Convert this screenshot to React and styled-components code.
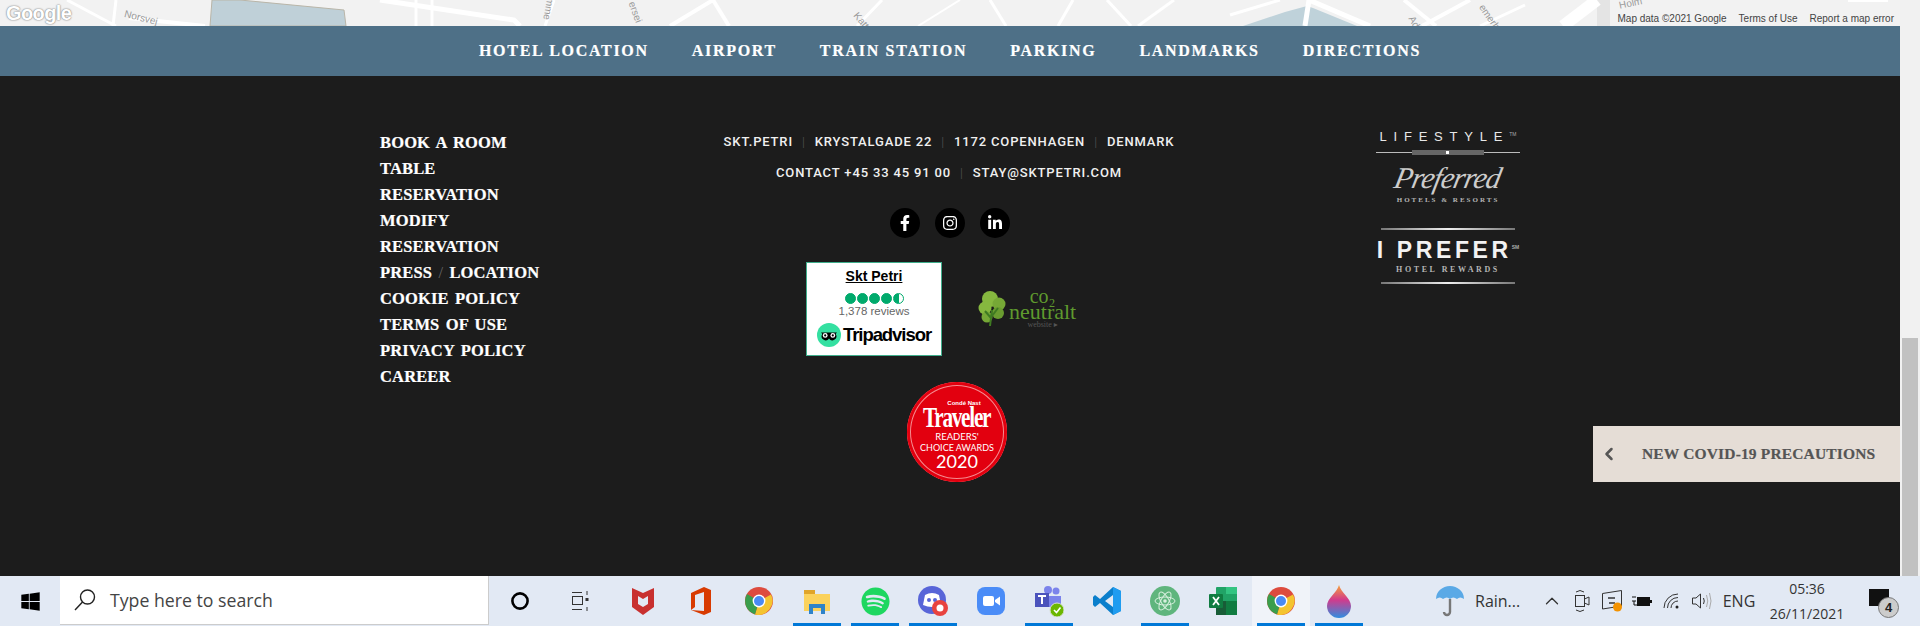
import React from "react";
import styled, { createGlobalStyle } from "styled-components";
import { FaFacebookF, FaInstagram, FaLinkedinIn, FaWindows, FaSpotify } from "react-icons/fa";
import { FiChevronLeft, FiChevronUp } from "react-icons/fi";

const GlobalStyle = createGlobalStyle`
  html, body { margin: 0; padding: 0; background: #1c1c1c; overflow: hidden; }
  * { box-sizing: border-box; }
`;

const serif = `"Liberation Serif", "DejaVu Serif", serif`;
const sans = `"Liberation Sans", Arial, sans-serif`;

const Page = styled.div`
  width: 1920px;
  height: 626px;
  display: flex;
  flex-direction: column;
`;
const Top = styled.div`
  height: 576px;
  display: flex;
`;
const Site = styled.div`
  width: 1900px;
  display: flex;
  flex-direction: column;
`;
const Scrollbar = styled.div`
  width: 20px;
  background: #f1f1f1;
  padding: 338px 2px 0;
`;
const Thumb = styled.div`
  height: 100%;
  background: #c1c1c1;
`;

const MapStrip = styled.div`
  height: 26px;
  position: relative;
  background: #f2f2f2;
  overflow: hidden;
`;
const MapSvg = styled.svg`
  display: block;
`;
const GoogleMark = styled.span`
  position: absolute;
  left: 6px;
  top: 1px;
  font: bold 20px/24px ${sans};
  letter-spacing: -0.6px;
  color: #fff;
  text-shadow: 0 0 2px #888, 0 0 1px #777;
`;
const MapCredits = styled.div`
  position: absolute;
  right: 6px;
  bottom: 0;
  display: flex;
  gap: 12px;
  font: 10px/14px ${sans};
  color: #444;
`;
const StreetName = styled.span`
  position: absolute;
  left: ${(p) => p.$x}px;
  top: ${(p) => p.$y}px;
  font: 10px/12px ${sans};
  color: #999;
  white-space: nowrap;
  transform: rotate(${(p) => p.$r || 0}deg);
  transform-origin: left top;
`;

const LocationBar = styled.nav`
  height: 50px;
  background: #4e7087;
  display: flex;
  justify-content: center;
  align-items: center;
  gap: 43px;
`;
const LocationLink = styled.a`
  font: bold 16px/20px ${serif};
  letter-spacing: 1.7px;
  -webkit-text-stroke: 0.2px #fff;
  color: #fff;
`;

const Footer = styled.footer`
  flex: 1;
  position: relative;
  background: #1c1c1c;
  display: flex;
  padding-left: 380px;
`;
const LinkColumn = styled.ul`
  list-style: none;
  margin: 0;
  padding: 54px 0 0;
  width: 170px;
`;
const FooterLink = styled.li`
  font: bold 16.5px/26px ${serif};
  letter-spacing: 0.15px;
  word-spacing: 2px;
  -webkit-text-stroke: 0.2px #fff;
  color: #fff;
`;
const Slash = styled.span`
  color: #666;
  font-weight: normal;
  -webkit-text-stroke: 0;
`;
const CenterColumn = styled.div`
  width: 798px;
  padding-top: 50px;
  display: flex;
  flex-direction: column;
  align-items: center;
`;
const AddressLine = styled.div`
  font: 500 13px/31px Roboto, ${sans};
  letter-spacing: 0.85px;
  color: #f0f0f0;
  display: flex;
  white-space: nowrap;
`;
const AddressPart = styled.span`
  & + &::before {
    content: "|";
    color: #555;
    margin: 0 9px;
    font-weight: 300;
  }
`;
const SocialRow = styled.div`
  display: flex;
  gap: 15px;
  margin: 20px 0 0 2px;
`;
const SocialIcon = styled.a`
  width: 30px;
  height: 30px;
  border-radius: 50%;
  background: #000;
  color: #fff;
  display: flex;
  align-items: center;
  justify-content: center;
  font-size: 16px;
`;
const BadgeRow = styled.div`
  width: 286px;
  margin-top: 24px;
  display: flex;
  gap: 35px;
`;
const TripCard = styled.div`
  width: 136px;
  height: 94px;
  background: #fff;
  border: 1.5px solid #3fae8c;
  display: flex;
  flex-direction: column;
  align-items: center;
  padding-top: 5px;
`;
const TripTitle = styled.div`
  font: bold 14px/17px ${sans};
  color: #000;
  text-decoration: underline;
`;
const Bubbles = styled.div`
  display: flex;
  gap: 1px;
  margin-top: 8px;
`;
const Bubble = styled.span`
  width: 11px;
  height: 11px;
  border-radius: 50%;
  border: 1px solid #00aa6c;
  background: ${(p) =>
    p.$half ? "linear-gradient(90deg, #00aa6c 50%, #fff 50%)" : "#00aa6c"};
`;
const TripReviews = styled.div`
  font: 11.5px/13px ${sans};
  color: #666;
  margin-top: 1px;
`;
const TripBrand = styled.div`
  display: flex;
  align-items: center;
  gap: 2px;
  margin-top: 5px;
  font: bold 18.5px/24px ${sans};
  letter-spacing: -1.05px;
  color: #000;
`;
const Co2Badge = styled.div`
  display: flex;
  align-items: center;
  height: 44px;
  margin-top: 25px;
  gap: 2px;
`;
const Co2Text = styled.div`
  display: flex;
  flex-direction: column;
  align-items: center;
  font-family: ${serif};
  color: #5f9a2e;
`;
const Co2Line = styled.span`
  font-size: ${(p) => p.$size}px;
  line-height: ${(p) => p.$lh}px;
  color: ${(p) => p.$color || "inherit"};
`;
const AwardSeal = styled.div`
  width: 100px;
  height: 100px;
  margin: 26px 0 0 16px;
  border-radius: 50%;
  background: #e2000f;
  box-shadow: inset 0 0 0 3px #e2000f, inset 0 0 0 4px #f58a8f;
  color: #fff;
  display: flex;
  flex-direction: column;
  align-items: center;
  padding-top: 19px;
  font-family: Lato, ${sans};
`;
const AwardBrand = styled.div`
  font: bold 6px/5px ${sans};
  margin-left: 14px;
  white-space: nowrap;
`;
const AwardTitle = styled.div`
  font: bold 25px/24px ${serif};
  letter-spacing: -1.5px;
  transform: scale(0.85, 1.15);
  margin-bottom: 1px;
`;
const AwardLine = styled.div`
  font-size: ${(p) => p.$size}px;
  line-height: ${(p) => p.$lh}px;
  white-space: nowrap;
`;
const RightColumn = styled.div`
  width: 146px;
  margin-left: 27px;
  padding-top: 53px;
  display: flex;
  flex-direction: column;
  align-items: center;
  color: #e8e8e8;
`;
const LifestyleMark = styled.div`
  font: 13px/16px ${sans};
  letter-spacing: 6.8px;
  white-space: nowrap;
`;
const TradeMark = styled.sup`
  font-size: 5px;
  letter-spacing: 0;
  line-height: 0;
  color: #aaa;
`;
const Divider = styled.div`
  width: 144px;
  height: 1px;
  margin-top: 7px;
  background: #bbb;
  position: relative;
  &::before {
    content: "";
    position: absolute;
    left: 70px;
    top: -1px;
    width: 3px;
    height: 3px;
    background: #fff;
    z-index: 1;
  }
  &::after {
    content: "";
    position: absolute;
    left: 36px;
    right: 36px;
    top: -2px;
    height: 5px;
    background: #666;
  }
`;
const Script = styled.div`
  font: italic 30px/30px ${serif};
  letter-spacing: -1px;
  margin-top: 10px;
  color: #ccc;
  transform: skewX(-12deg);
`;
const TinyCaps = styled.div`
  font: bold ${(p) => p.$size}px/10px ${serif};
  letter-spacing: ${(p) => p.$spacing}px;
  color: #b5b5b5;
  white-space: nowrap;
  margin-top: ${(p) => p.$top || 0}px;
`;
const ShinyRule = styled.div`
  width: 134px;
  height: 2px;
  margin-top: ${(p) => p.$top}px;
  background: linear-gradient(90deg, #777, #eee 50%, #777);
`;
const PreferMark = styled.div`
  font: bold 23px/24px ${sans};
  letter-spacing: 3.6px;
  margin-top: 8px;
  white-space: nowrap;
  color: #f2f2f2;
`;

const CovidTab = styled.div`
  position: absolute;
  right: 0;
  top: 350px;
  width: 307px;
  height: 56px;
  background: #e5ddd6;
  display: flex;
  align-items: center;
  padding-left: 6px;
  color: #555;
`;
const CovidText = styled.span`
  margin-left: 23px;
  font: bold 15.5px/20px ${serif};
  letter-spacing: 0.15px;
  -webkit-text-stroke: 0.2px #555;
  white-space: nowrap;
`;

const Taskbar = styled.div`
  height: 50px;
  background: #e2e9f4;
  display: flex;
  align-items: stretch;
`;
const StartButton = styled.div`
  width: 60px;
  display: flex;
  align-items: center;
  justify-content: center;
  color: #000;
  font-size: 21px;
`;
const SearchBox = styled.div`
  width: 429px;
  margin: 0 0 1px;
  background: #fff;
  border-right: 1px solid #ccc;
  border-bottom: 1px solid #ccc;
  display: flex;
  align-items: center;
  gap: 14px;
  padding-left: 14px;
  font: 17.7px/24px "Open Sans", ${sans};
  color: #444;
`;
const TaskSlot = styled.div`
  width: ${(p) => p.$w || 58}px;
  position: relative;
  display: flex;
  align-items: center;
  justify-content: center;
  background: ${(p) => (p.$active ? "#f0f3f9" : "transparent")};
  &::after {
    content: "";
    display: ${(p) => (p.$open ? "block" : "none")};
    position: absolute;
    left: 5px;
    right: 5px;
    bottom: 0;
    height: 3px;
    background: #0078d7;
  }
`;
const AppStrip = styled.div`
  display: flex;
  margin-left: 5px;
`;
const Tray = styled.div`
  margin-left: 60px;
  display: flex;
  align-items: center;
  color: #333;
  font: 16px/20px "Open Sans", ${sans};
`;
const TraySlot = styled.div`
  width: ${(p) => p.$w}px;
  padding-left: ${(p) => p.$pad || 0}px;
  display: flex;
  align-items: center;
  justify-content: ${(p) => (p.$pad ? "flex-start" : "center")};
`;
const Clock = styled.div`
  width: 92px;
  text-align: center;
  font: 14px/25px "Open Sans", ${sans};
`;
const Notice = styled.div`
  position: relative;
  margin: -8px 0 0 16px;
  width: 20px;
  height: 17px;
  background: #111;
`;
const NoticeCount = styled.span`
  position: absolute;
  left: 9px;
  top: 8px;
  width: 21px;
  height: 21px;
  border-radius: 50%;
  background: #ccc;
  border: 1px solid #777;
  font: bold 13px/19px ${sans};
  color: #222;
  text-align: center;
`;

const roads = [
  ["M67 0 L116 26", 3], ["M116 0 L113 26", 3], ["M129 18 L205 26", 4], ["M380 0 L514 20 L520 26", 5],
  ["M416 0 L416 26", 3], ["M432 0 L432 26", 3], ["M545 26 L554 0", 3], ["M670 26 L713 0 L729 26", 4],
  ["M857 26 L882 0", 3], ["M918 26 L960 0", 2], ["M990 0 L1006 26", 3], ["M1058 26 L1073 0", 3],
  ["M1107 0 L1131 26", 3], ["M1138 26 L1174 0", 3], ["M1230 15 L1280 0", 3], ["M1305 26 L1309 0", 5],
  ["M1309 0 L1370 26", 5], ["M1404 0 L1436 26", 4], ["M1422 26 L1470 0", 4], ["M1480 26 L1525 5", 3],
  ["M1563 26 L1597 0", 12],
];

const MapLayer = () => (
  <MapStrip>
    <MapSvg width="1900" height="26" viewBox="0 0 1900 26">
      <path d="M210 26 L212 0 L240 0 L344 10 L346 26 Z" fill="#bfd0d8" stroke="#b9b5a8" />
      <path d="M1243 26 L1285 12 L1307 6 L1313 8 L1357 26 Z" fill="#bfd2da" />
      <rect x="1597" y="0" width="13" height="26" fill="#e4e4e4" />
      <rect x="1848" y="0" width="40" height="2" fill="#fff" />
      {roads.map(([d, w]) => (
        <path key={d} d={d} stroke="#fff" strokeWidth={w} fill="none" />
      ))}
    </MapSvg>
    <GoogleMark>Google</GoogleMark>
    <StreetName $x={126} $y={8} $r={14}>Norsvej</StreetName>
    <StreetName $x={1416} $y={14} $r={60}>Ad</StreetName>
    <StreetName $x={1486} $y={2} $r={55}>emerho</StreetName>
    <StreetName $x={1618} $y={0} $r={-12}>Holm</StreetName>
    <StreetName $x={860} $y={10} $r={50}>Katt</StreetName>
    <StreetName $x={637} $y={0} $r={70}>ersei</StreetName>
    <StreetName $x={556} $y={-1} $r={100}>mme</StreetName>
    <MapCredits>
      <span>Map data ©2021 Google</span>
      <span>Terms of Use</span>
      <span>Report a map error</span>
    </MapCredits>
  </MapStrip>
);

const TripOwl = () => (
  <svg width="24" height="24" viewBox="0 0 24 24">
    <circle cx="12" cy="12" r="12" fill="#34e0a1" />
    <path d="M4 9.5 H20 L18.6 11 A4 4 0 0 1 12 15.6 A4 4 0 0 1 5.4 11 Z" fill="#000" />
    <circle cx="8.2" cy="12.4" r="2.4" fill="#fff" />
    <circle cx="15.8" cy="12.4" r="2.4" fill="#fff" />
    <circle cx="8.2" cy="12.4" r="1.1" fill="#000" />
    <circle cx="15.8" cy="12.4" r="1.1" fill="#000" />
  </svg>
);

const Tree = () => (
  <svg width="30" height="38" viewBox="0 0 28 38">
    <circle cx="12" cy="9" r="8" fill="#86b83f" />
    <circle cx="21" cy="14" r="6.5" fill="#76a836" />
    <circle cx="7" cy="18" r="6.5" fill="#86b83f" />
    <circle cx="20" cy="23" r="6" fill="#6a9c30" />
    <circle cx="9" cy="27" r="5.5" fill="#76a836" />
    <path d="M12 36 L14 20 M14 26 L20 18 M13 28 L7 21" stroke="#3f7a22" strokeWidth="2" fill="none" />
  </svg>
);

const McAfee = () => (
  <svg width="26" height="30" viewBox="0 0 26 30">
    <path d="M2 2 L13 7 L24 2 V21 L13 29 L2 21 Z" fill="#c8302f" />
    <path d="M8 10 L13 13 L18 10 V18 L13 21 L8 18 Z" fill="#e2e9f4" />
  </svg>
);
const Office = () => (
  <svg width="26" height="30" viewBox="0 0 26 30">
    <path d="M3 7 L16 1 L23 4 V26 L16 29 L3 24 L16 25 V6 L7 9 V21 L3 24 Z" fill="#d83b01" />
  </svg>
);
const Chrome = () => (
  <svg width="28" height="28" viewBox="0 0 28 28">
    <circle cx="14" cy="14" r="14" fill="#dd4b3e" />
    <path d="M14 14 L26 7.5 A14 14 0 0 1 10 27.4 Z" fill="#f4c430" />
    <path d="M14 14 L10 27.4 A14 14 0 0 1 2 7 Z" fill="#3a9e4c" />
    <circle cx="14" cy="14" r="6.4" fill="#fff" />
    <circle cx="14" cy="14" r="5" fill="#4a8af4" />
  </svg>
);
const Folder = () => (
  <svg width="28" height="28" viewBox="0 0 28 28">
    <path d="M1 3 H12 V7 H1 Z" fill="#e0a52a" />
    <path d="M1 7 H27 V24 H1 Z" fill="#fbd25c" />
    <path d="M6 17 H22 V27 H18 V21 H10 V27 H6 Z" fill="#2e83c8" />
  </svg>
);
const Discord = () => (
  <svg width="30" height="32" viewBox="0 0 30 32">
    <circle cx="14" cy="15" r="14" fill="#5865d8" />
    <path d="M7 10 Q14 6 21 10 L23 20 Q14 24 5 20 Z" fill="#fff" />
    <circle cx="11" cy="15" r="2" fill="#5865d8" />
    <circle cx="17" cy="15" r="2" fill="#5865d8" />
    <circle cx="22" cy="23" r="8" fill="#e8433f" />
    <circle cx="22" cy="23" r="3.5" fill="#fff" />
  </svg>
);
const Zoom = () => (
  <svg width="28" height="28" viewBox="0 0 28 28">
    <rect width="28" height="28" rx="8" fill="#4a8cf7" />
    <rect x="6" y="9" width="11" height="10" rx="2" fill="#fff" />
    <path d="M18 13 L23 9.5 V18.5 L18 15 Z" fill="#fff" />
  </svg>
);
const Teams = () => (
  <svg width="30" height="32" viewBox="0 0 30 32">
    <circle cx="22" cy="6" r="3.5" fill="#7b83eb" />
    <circle cx="14" cy="5" r="4" fill="#7b83eb" />
    <path d="M12 11 H27 V22 H12 Z" fill="#7b83eb" />
    <rect x="1" y="8" width="14" height="14" fill="#4b53bc" />
    <path d="M4 11 H12 M8 11 V19" stroke="#fff" strokeWidth="2" />
    <circle cx="23" cy="25" r="7" fill="#6bb700" stroke="#d7dfd0" />
    <path d="M20 25 L22.5 27.5 L26.5 22.5" stroke="#fff" strokeWidth="1.6" fill="none" />
  </svg>
);
const VsCode = () => (
  <svg width="30" height="30" viewBox="0 0 30 30">
    <path d="M21 1 L29 5 V25 L21 29 L8 17 L3 21 L1 19 V11 L3 9 L8 13 Z M21 9 L13 15 L21 21 Z" fill="#0b7fcc" />
    <path d="M21 1 L29 5 V25 L21 29 Z" fill="#1f9cf0" />
  </svg>
);
const Atom = () => (
  <svg width="30" height="30" viewBox="0 0 30 30">
    <circle cx="15" cy="15" r="15" fill="#5fb57d" />
    <g stroke="#d8f0df" strokeWidth="1" fill="none">
      <ellipse cx="15" cy="15" rx="10" ry="4" />
      <ellipse cx="15" cy="15" rx="10" ry="4" transform="rotate(60 15 15)" />
      <ellipse cx="15" cy="15" rx="10" ry="4" transform="rotate(120 15 15)" />
    </g>
    <circle cx="15" cy="15" r="1.8" fill="#d8f0df" />
  </svg>
);
const Excel = () => (
  <svg width="30" height="30" viewBox="0 0 30 30">
    <rect x="8" y="1" width="21" height="28" rx="1" fill="#21a366" />
    <rect x="18" y="15" width="11" height="14" fill="#107c41" />
    <rect x="8" y="15" width="10" height="14" fill="#185c37" />
    <rect x="18" y="1" width="11" height="7" fill="#33c481" />
    <rect x="1" y="8" width="14" height="14" rx="1" fill="#107c41" />
    <path d="M5 11 L11 19 M11 11 L5 19" stroke="#fff" strokeWidth="1.8" />
  </svg>
);
const Drop = () => (
  <svg width="26" height="34" viewBox="0 0 26 34">
    <defs>
      <linearGradient id="dropFill" x1="0" y1="0" x2="0" y2="1">
        <stop offset="0" stopColor="#f6a13a" />
        <stop offset="0.45" stopColor="#d13b8c" />
        <stop offset="1" stopColor="#2f8de0" />
      </linearGradient>
    </defs>
    <path d="M13 1 C15 9 25 14 25 22 A12 12 0 0 1 1 22 C1 14 11 9 13 1 Z" fill="url(#dropFill)" />
  </svg>
);
const Cortana = () => (
  <svg width="20" height="20" viewBox="0 0 20 20">
    <circle cx="10" cy="10" r="7.6" fill="none" stroke="#000" strokeWidth="2.6" />
  </svg>
);
const TaskView = () => (
  <svg width="20" height="24" viewBox="0 0 20 24" stroke="#333" fill="none">
    <path d="M2 3.5 H12 M2 20.5 H12" />
    <rect x="2.5" y="7.5" width="10" height="8" />
    <path d="M17 2 V6 M17 18 V22" />
    <rect x="15.5" y="9" width="3" height="3" fill="#333" stroke="none" />
  </svg>
);
const SearchGlass = () => (
  <svg width="22" height="24" viewBox="0 0 22 24" stroke="#222" fill="none" strokeWidth="1.4">
    <circle cx="13.5" cy="9" r="7" />
    <path d="M8.5 14 L1 22" />
  </svg>
);
const Umbrella = () => (
  <svg width="30" height="32" viewBox="0 0 30 32">
    <path d="M1 14 A14 13 0 0 1 29 14 Q25 11 22 14 Q18 11 15 14 Q12 11 8 14 Q5 11 1 14 Z" fill="#5aa9e6" />
    <path d="M15 14 V27 A3 3 0 0 1 9 27" stroke="#777" strokeWidth="2.4" fill="none" />
  </svg>
);
const Meet = () => (
  <svg width="18" height="26" viewBox="0 0 18 26" stroke="#333" fill="none">
    <rect x="2.5" y="7.5" width="9" height="11" />
    <path d="M11.5 11 L16 9 V17 L11.5 15 M3 4 Q7 1 11 4 M3 22 Q7 25 11 22" />
  </svg>
);
const Rdp = () => (
  <svg width="22" height="26" viewBox="0 0 22 26">
    <path d="M1.5 5.5 L20.5 2.5 V18 L1.5 21 Z" fill="none" stroke="#333" />
    <path d="M7 10 H14 M14 15 H8" stroke="#333" strokeWidth="1.5" />
    <circle cx="16.5" cy="19" r="4.5" fill="#f39200" />
  </svg>
);
const Battery = () => (
  <svg width="20" height="14" viewBox="0 0 20 14">
    <path d="M0 3 H4 M0 7 H4 M2 7 V11 H5" stroke="#111" fill="none" />
    <rect x="5" y="3" width="13" height="9" fill="#111" />
    <rect x="18" y="6" width="2" height="3" fill="#111" />
  </svg>
);
const Wifi = () => (
  <svg width="18" height="18" viewBox="0 0 18 18" stroke="#333" fill="none">
    <path d="M1 16 A14 14 0 0 1 15 2 M4.5 16 A10.5 10.5 0 0 1 15 5.5 M8 16 A7 7 0 0 1 15 9" />
    <circle cx="14" cy="15" r="1.5" fill="#222" stroke="none" />
  </svg>
);
const Volume = () => (
  <svg width="22" height="18" viewBox="0 0 22 18" stroke="#333" fill="none">
    <path d="M1.5 6 H5 L9.5 2 V16 L5 12 H1.5 Z" />
    <path d="M12.5 6 Q14 9 12.5 12" />
    <path d="M15.5 3 Q18 9 15.5 15 M18.5 1 Q21.5 9 18.5 17" stroke="#aaa" />
  </svg>
);

const locationLinks = ["HOTEL LOCATION", "AIRPORT", "TRAIN STATION", "PARKING", "LANDMARKS", "DIRECTIONS"];
const footerLinks = [
  "BOOK A ROOM",
  "TABLE RESERVATION",
  "MODIFY RESERVATION",
  <React.Fragment key="press">PRESS <Slash>/</Slash> LOCATION</React.Fragment>,
  "COOKIE POLICY",
  "TERMS OF USE",
  "PRIVACY POLICY",
  "CAREER",
];
const apps = [
  { icon: <McAfee /> },
  { icon: <Office /> },
  { icon: <Chrome /> },
  { icon: <Folder />, open: true },
  { icon: <FaSpotify size={29} color="#1ed760" />, open: true },
  { icon: <Discord />, open: true },
  { icon: <Zoom /> },
  { icon: <Teams />, open: true },
  { icon: <VsCode /> },
  { icon: <Atom />, open: true },
  { icon: <Excel /> },
  { icon: <Chrome />, open: true, active: true },
  { icon: <Drop />, open: true },
];

export default function App() {
  return (
    <Page>
      <GlobalStyle />
      <Top>
        <Site>
          <MapLayer />
          <LocationBar>
            {locationLinks.map((l) => (
              <LocationLink key={l}>{l}</LocationLink>
            ))}
          </LocationBar>
          <Footer>
            <LinkColumn>
              {footerLinks.map((l, i) => (
                <FooterLink key={i}>{l}</FooterLink>
              ))}
            </LinkColumn>
            <CenterColumn>
              <AddressLine>
                <AddressPart>SKT.PETRI</AddressPart>
                <AddressPart>KRYSTALGADE 22</AddressPart>
                <AddressPart>1172 COPENHAGEN</AddressPart>
                <AddressPart>DENMARK</AddressPart>
              </AddressLine>
              <AddressLine>
                <AddressPart>CONTACT +45 33 45 91 00</AddressPart>
                <AddressPart>STAY@SKTPETRI.COM</AddressPart>
              </AddressLine>
              <SocialRow>
                <SocialIcon><FaFacebookF /></SocialIcon>
                <SocialIcon><FaInstagram /></SocialIcon>
                <SocialIcon><FaLinkedinIn /></SocialIcon>
              </SocialRow>
              <BadgeRow>
                <TripCard>
                  <TripTitle>Skt Petri</TripTitle>
                  <Bubbles>
                    <Bubble /><Bubble /><Bubble /><Bubble /><Bubble $half />
                  </Bubbles>
                  <TripReviews>1,378 reviews</TripReviews>
                  <TripBrand><TripOwl />Tripadvisor</TripBrand>
                </TripCard>
                <Co2Badge>
                  <Tree />
                  <Co2Text>
                    <Co2Line $size={20} $lh={15}>co₂</Co2Line>
                    <Co2Line $size={22} $lh={16}>neutralt</Co2Line>
                    <Co2Line $size={8} $lh={9} $color="#555">website ▸</Co2Line>
                  </Co2Text>
                </Co2Badge>
              </BadgeRow>
              <AwardSeal>
                <AwardBrand>Condé Nast</AwardBrand>
                <AwardTitle>Traveler</AwardTitle>
                <AwardLine $size={9.5} $lh={11}>READERS'</AwardLine>
                <AwardLine $size={9} $lh={11}>CHOICE AWARDS</AwardLine>
                <AwardLine $size={18} $lh={17}>2020</AwardLine>
              </AwardSeal>
            </CenterColumn>
            <RightColumn>
              <LifestyleMark>LIFESTYLE<TradeMark>TM</TradeMark></LifestyleMark>
              <Divider />
              <Script>Preferred</Script>
              <TinyCaps $size={7} $spacing={2} $top={2}>HOTELS &amp; RESORTS</TinyCaps>
              <ShinyRule $top={23} />
              <PreferMark>I PREFER<TradeMark>SM</TradeMark></PreferMark>
              <TinyCaps $size={8} $spacing={2.6} $top={3}>HOTEL REWARDS</TinyCaps>
              <ShinyRule $top={7} />
            </RightColumn>
            <CovidTab>
              <FiChevronLeft size={20} strokeWidth={3} />
              <CovidText>NEW COVID-19 PRECAUTIONS</CovidText>
            </CovidTab>
          </Footer>
        </Site>
        <Scrollbar><Thumb /></Scrollbar>
      </Top>
      <Taskbar>
        <StartButton><FaWindows /></StartButton>
        <SearchBox><SearchGlass />Type here to search</SearchBox>
        <TaskSlot $w={62}><Cortana /></TaskSlot>
        <TaskSlot $w={58}><TaskView /></TaskSlot>
        <AppStrip>
          {apps.map((a, i) => (
            <TaskSlot key={i} $open={a.open} $active={a.active}>{a.icon}</TaskSlot>
          ))}
        </AppStrip>
        <Tray>
          <TraySlot $w={44}><Umbrella /></TraySlot>
          <TraySlot $w={65} $pad={3}>Rain...</TraySlot>
          <TraySlot $w={30}><FiChevronUp size={22} strokeWidth={1.4} /></TraySlot>
          <TraySlot $w={30}><Meet /></TraySlot>
          <TraySlot $w={30}><Rdp /></TraySlot>
          <TraySlot $w={30}><Battery /></TraySlot>
          <TraySlot $w={30}><Wifi /></TraySlot>
          <TraySlot $w={30}><Volume /></TraySlot>
          <TraySlot $w={44}>ENG</TraySlot>
          <Clock>05:36<br />26/11/2021</Clock>
          <Notice><NoticeCount>4</NoticeCount></Notice>
        </Tray>
      </Taskbar>
    </Page>
  );
}
